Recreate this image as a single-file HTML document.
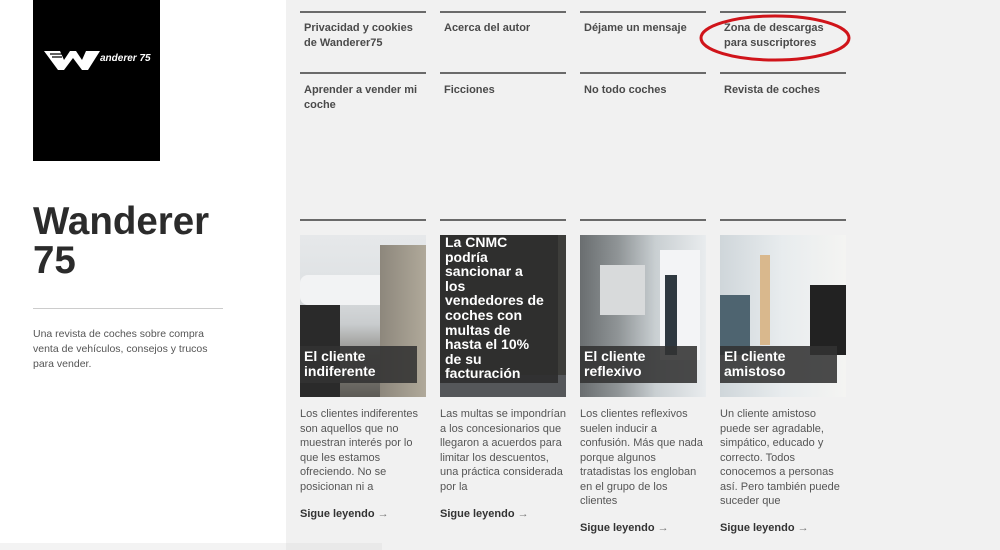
<!DOCTYPE html>
<html><head><meta charset="utf-8"><style>
*{margin:0;padding:0;box-sizing:border-box}
body{width:1000px;height:550px;overflow:hidden;background:#fff;font-family:"Liberation Sans",Arial,sans-serif;position:relative;color:#444}
.right{position:absolute;left:286px;top:0;width:714px;height:550px;background:#f1f1f1}
.a{position:absolute}
.line{position:absolute;height:2px;background:#6a6a6a;width:126px}
.menu{position:absolute;font-size:11px;font-weight:bold;color:#4a4a4a;line-height:15px;width:140px;white-space:nowrap}
.img{position:absolute;top:235px;width:126px;height:162px;overflow:hidden}
.ov{position:absolute;left:0;top:111px;width:117px;height:37px;background:rgba(50,50,50,.88);color:#fff;font-weight:bold;font-size:14px;line-height:15px;padding:3px 0 0 4px}
.txt{position:absolute;top:407px;width:126px;font-size:11px;line-height:14.5px;color:#555}
.more{position:absolute;font-size:11px;font-weight:bold;color:#333}
.more span{font-weight:normal;color:#777}
</style></head><body>
<div class="a" style="left:33px;top:0;width:127px;height:161px;background:#000"></div>
<svg class="a" style="left:42px;top:48px" width="60" height="24" viewBox="0 0 60 24"><path d="M2 3 L18 3 L22 12 L28 3 L34 3 L40 12 L44 3 L58 3 L46 22 L40 22 L31 10 L22 22 L16 22 Z" fill="#fff"/><path d="M8 6 L20 6 M10 9 L20 9" stroke="#000" stroke-width="1.2"/></svg>
<div class="a" style="left:100px;top:53px;color:#fff;font-size:10px;font-weight:bold;font-style:italic">anderer 75</div>
<div class="a" style="left:33px;top:202px;font-size:38.5px;font-weight:bold;color:#2b2b2b;line-height:39px">Wanderer<br>75</div>
<div class="a" style="left:33px;top:308px;width:190px;height:1px;background:#ccc"></div>
<div class="a" style="left:33px;top:327px;font-size:10.5px;line-height:15px;color:#555;white-space:nowrap">Una revista de coches sobre compra<br>venta de vehículos, consejos y trucos<br>para vender.</div>
<div class="right"></div>
<div class="a" style="left:0;top:543px;width:286px;height:7px;background:#f3f3f3"></div>
<div class="a" style="left:286px;top:543px;width:96px;height:7px;background:#e9e9e9"></div>

<div class="line" style="left:300px;top:11px"></div><div class="line" style="left:440px;top:11px"></div><div class="line" style="left:580px;top:11px"></div><div class="line" style="left:720px;top:11px"></div>
<div class="menu" style="left:304px;top:21px">Privacidad y cookies<br>de Wanderer75</div>
<div class="menu" style="left:444px;top:21px">Acerca del autor</div>
<div class="menu" style="left:584px;top:21px">Déjame un mensaje</div>
<div class="menu" style="left:724px;top:21px">Zona de descargas<br>para suscriptores</div>
<svg class="a" style="left:698px;top:12px" width="156" height="52"><ellipse cx="77" cy="26" rx="74" ry="22" fill="none" stroke="#d0141a" stroke-width="3"/></svg>
<div class="line" style="left:300px;top:72px"></div><div class="line" style="left:440px;top:72px"></div><div class="line" style="left:580px;top:72px"></div><div class="line" style="left:720px;top:72px"></div>
<div class="menu" style="left:304px;top:83px">Aprender a vender mi<br>coche</div>
<div class="menu" style="left:444px;top:83px">Ficciones</div>
<div class="menu" style="left:584px;top:83px">No todo coches</div>
<div class="menu" style="left:724px;top:83px">Revista de coches</div>
<div class="line" style="left:300px;top:219px"></div><div class="line" style="left:440px;top:219px"></div><div class="line" style="left:580px;top:219px"></div><div class="line" style="left:720px;top:219px"></div>

<div class="img" style="left:300px;background:linear-gradient(180deg,#e6e8ea 0%,#dfe2e4 30%,#c9ccce 55%,#8c8a84 75%,#5c5a55 100%)">
<div class="a" style="left:0;top:40px;width:90px;height:30px;background:#f2f3f4;border-radius:8px"></div>
<div class="a" style="left:80px;top:10px;width:46px;height:152px;background:linear-gradient(90deg,#8d877c,#b0a99a)"></div>
<div class="a" style="left:0;top:70px;width:40px;height:92px;background:#2a2a2a"></div>
<div class="ov">El cliente<br>indiferente</div></div>
<div class="img" style="left:440px;background:#3d3d3a">
<div class="a" style="left:0;top:140px;width:126px;height:22px;background:#55575a"></div>
<div class="a" style="left:0;top:0;width:118px;height:148px;background:rgba(45,45,45,.9);color:#fff;font-weight:bold;font-size:14px;line-height:14.6px;padding:0 0 0 5px;white-space:nowrap">La CNMC<br>podría<br>sancionar a<br>los<br>vendedores de<br>coches con<br>multas de<br>hasta el 10%<br>de su<br>facturación</div></div>
<div class="img" style="left:580px;background:linear-gradient(90deg,#6a6e70 0%,#8f9496 30%,#c9cfd2 60%,#e9ecee 100%)">
<div class="a" style="left:80px;top:15px;width:40px;height:110px;background:#f3f4f6"></div>
<div class="a" style="left:85px;top:40px;width:12px;height:80px;background:#2e3840"></div>
<div class="a" style="left:20px;top:30px;width:45px;height:50px;background:#d8dadb"></div>
<div class="ov">El cliente<br>reflexivo</div></div>
<div class="img" style="left:720px;background:linear-gradient(90deg,#cfd6da 0%,#e8ecee 50%,#f4f4f2 100%)">
<div class="a" style="left:40px;top:20px;width:10px;height:90px;background:#d9b88d"></div>
<div class="a" style="left:90px;top:50px;width:36px;height:70px;background:#222"></div>
<div class="a" style="left:0;top:60px;width:30px;height:60px;background:#4e6470"></div>
<div class="ov">El cliente<br>amistoso</div></div>

<div class="txt" style="left:300px">Los clientes indiferentes son aquellos que no muestran interés por lo que les estamos ofreciendo. No se posicionan ni a</div>
<div class="txt" style="left:440px">Las multas se impondrían a los concesionarios que llegaron a acuerdos para limitar los descuentos, una práctica considerada por la</div>
<div class="txt" style="left:580px">Los clientes reflexivos suelen inducir a confusión. Más que nada porque algunos tratadistas los engloban en el grupo de los clientes</div>
<div class="txt" style="left:720px">Un cliente amistoso puede ser agradable, simpático, educado y correcto. Todos conocemos a personas así. Pero también puede suceder que</div>
<div class="more" style="left:300px;top:508px">Sigue leyendo <span>→</span></div>
<div class="more" style="left:440px;top:508px">Sigue leyendo <span>→</span></div>
<div class="more" style="left:580px;top:522px">Sigue leyendo <span>→</span></div>
<div class="more" style="left:720px;top:522px">Sigue leyendo <span>→</span></div>
</body></html>
